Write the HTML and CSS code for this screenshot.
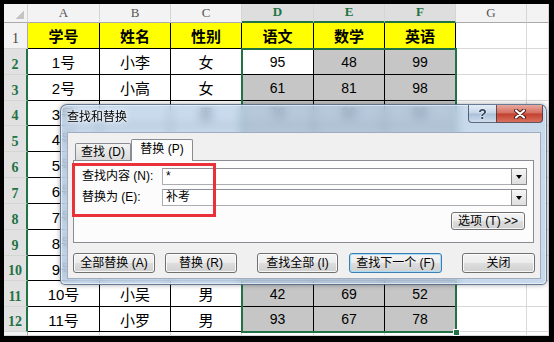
FILE: index.html
```html
<!DOCTYPE html>
<html lang="zh-CN">
<head>
    <meta charset="UTF-8">
    <title>查找和替换</title>
    <link rel="stylesheet" href="styles.css">
</head>
<body>

<div class="frame">
    <div class="sheet">
        <div class="ch corner"></div><div class="ch">A</div><div class="ch">B</div><div class="ch">C</div><div class="ch sel">D</div><div class="ch sel">E</div><div class="ch sel">F</div><div class="ch">G</div><div class="ch"></div>

        <div class="rh">1</div><div class="t hd">学号</div><div class="t hd">姓名</div><div class="t hd">性别</div><div class="t hd">语文</div><div class="t hd">数学</div><div class="t hd">英语</div><div></div><div></div>
        <div class="rh sel">2</div><div class="t">1号</div><div class="t">小李</div><div class="t">女</div><div class="t a">95</div><div class="t s">48</div><div class="t s">99</div><div></div><div></div>
        <div class="rh sel">3</div><div class="t">2号</div><div class="t">小高</div><div class="t">女</div><div class="t s">61</div><div class="t s">81</div><div class="t s">98</div><div></div><div></div>
        <!-- 4-10 行被对话框挡住 -->
        <div class="rh sel">4</div><div class="t">3号</div><div class="t"></div><div class="t">男</div><div class="t s">78</div><div class="t s">90</div><div class="t s">66</div><div></div><div></div>
        <div class="rh sel">5</div><div class="t">4号</div><div class="t"></div><div class="t"></div><div class="t s"></div><div class="t s"></div><div class="t s"></div><div></div><div></div>
        <div class="rh sel">6</div><div class="t">5号</div><div class="t"></div><div class="t"></div><div class="t s"></div><div class="t s"></div><div class="t s"></div><div></div><div></div>
        <div class="rh sel">7</div><div class="t">6号</div><div class="t"></div><div class="t"></div><div class="t s"></div><div class="t s"></div><div class="t s"></div><div></div><div></div>
        <div class="rh sel">8</div><div class="t">7号</div><div class="t"></div><div class="t"></div><div class="t s"></div><div class="t s"></div><div class="t s"></div><div></div><div></div>
        <div class="rh sel">9</div><div class="t">8号</div><div class="t"></div><div class="t"></div><div class="t s"></div><div class="t s"></div><div class="t s"></div><div></div><div></div>
        <div class="rh sel">10</div><div class="t">9号</div><div class="t"></div><div class="t"></div><div class="t s"></div><div class="t s"></div><div class="t s"></div><div></div><div></div>
        <div class="rh sel">11</div><div class="t">10号</div><div class="t">小吴</div><div class="t">男</div><div class="t s">42</div><div class="t s">69</div><div class="t s">52</div><div></div><div></div>
        <div class="rh sel">12</div><div class="t">11号</div><div class="t">小罗</div><div class="t">男</div><div class="t s">93</div><div class="t s">67</div><div class="t s">78</div><div></div><div></div>
        <div class="rh"></div><div></div><div></div><div></div><div></div><div></div><div></div><div></div><div></div>
    </div>

    <!-- 选区边框和填充柄 -->
    <div class="selection"><span class="handle"></span></div>

    <div class="dialog">
        <div class="titlebar">
            <span class="title">查找和替换</span>
            <div class="caption">
                <span class="cap help">?</span>
                <span class="cap close">
                    <svg width="12" height="10" viewBox="0 0 12 10">
                        <path d="M2 1.5 L10 8.5 M10 1.5 L2 8.5" stroke="#4a1a14" stroke-width="4" stroke-linecap="round"/>
                        <path d="M2 1.5 L10 8.5 M10 1.5 L2 8.5" stroke="#fff" stroke-width="2.2" stroke-linecap="round"/>
                    </svg>
                </span>
            </div>
        </div>
        <div class="body">
            <div class="tabs">
                <span class="tab">查找 (D)</span>
                <span class="tab on">替换 (P)</span>
            </div>
            <div class="panel">
                <div class="field">
                    <label>查找内容 (N):</label>
                    <div class="combo"><span class="val">*</span><span class="drop"></span></div>
                </div>
                <div class="field">
                    <label>替换为 (E):</label>
                    <div class="combo"><span class="val">补考</span><span class="drop"></span></div>
                </div>
                <div class="opts">
                    <button class="btn opt">选项 (T) &gt;&gt;</button>
                </div>
                <!-- 红色标注框 -->
                <div class="mark"></div>
            </div>
            <div class="actions">
                <button class="btn b1">全部替换 (A)</button>
                <button class="btn b2">替换 (R)</button>
                <button class="btn b3">查找全部 (I)</button>
                <button class="btn b4 default">查找下一个 (F)</button>
                <button class="btn b5">关闭</button>
            </div>
        </div>
    </div>
</div>

</body>
</html>
```

FILE: styles.css
```css
* {
    box-sizing: border-box;
}
html, body {
    margin: 0;
    padding: 0;
}
body {
    width: 554px;
    height: 342px;
    overflow: hidden;
    background: #000;
    font-family: "Liberation Sans", "Noto Sans CJK SC", sans-serif;
}
.frame {
    position: relative;
    height: 342px;
    padding: 4px 5px 6px 4px;
}

/* 表格 */
.sheet {
    display: grid;
    grid-template-columns: 24px 72px 71px 71px 72px 71px 71px 71px 22px;
    grid-template-rows: 19px 26px 26px 26px 25px 26px 26px 26px 26px 26px 25px 26px 25px 4px;
    height: 332px;
    background: #fff;
    overflow: hidden;
}
.sheet > div {
    display: flex;
    align-items: center;
    justify-content: center;
    border-right: 1px solid #d8d8d8;
    border-bottom: 1px solid #d8d8d8;
    font-size: 15px;
    color: #000;
    white-space: nowrap;
    overflow: hidden;
}
.sheet > .ch {
    align-items: flex-end;
    padding-bottom: 1px;
    background: #f3f3f3;
    border-right-color: #d5d5d5;
    border-bottom-color: #ababab;
    font: 13px "Liberation Serif", serif;
    color: #555;
}
.sheet > .ch.sel {
    background: #dedede;
    color: #217346;
    font-weight: bold;
    border-bottom: 2px solid #217346;
}
.sheet > .corner {
    background: linear-gradient(135deg, transparent 50%, #c4c4c4 50%) no-repeat right 3px bottom 3px / 9px 9px, #f3f3f3;
}
.sheet > .rh {
    align-items: flex-end;
    padding-bottom: 1px;
    background: #f3f3f3;
    border-right-color: #ababab;
    border-bottom-color: #d5d5d5;
    font: 14px "Liberation Serif", serif;
    color: #444;
}
.sheet > .rh.sel {
    background: #e1e1e1;
    color: #217346;
    font-weight: bold;
    border-right: 2px solid #217346;
}
.sheet > .t {
    border-right-color: #000;
    border-bottom-color: #000;
}
.sheet > .hd {
    background: #ff0;
    font-weight: bold;
    font-size: 15px;
    font-family: "Noto Sans CJK SC", sans-serif;
}
.sheet > .s {
    background: #c6c6c6;
    font-size: 14px;
}
.sheet > .a {
    font-size: 14px;
}

.selection {
    position: absolute;
    left: 241px;
    top: 48px;
    width: 216px;
    height: 285px;
    border: 2px solid #217346;
}
.handle {
    position: absolute;
    right: -5px;
    bottom: -5px;
    width: 7px;
    height: 7px;
    background: #217346;
    border: 1px solid #fff;
}

/* 对话框 */
.dialog {
    position: absolute;
    left: 60px;
    top: 104px;
    width: 487px;
    height: 181px;
    display: flex;
    flex-direction: column;
    padding: 0 5px 5px 6px;
    border: 1px solid rgba(40, 60, 90, 0.6);
    border-radius: 7px 7px 5px 5px;
    background: rgba(176, 200, 228, 0.68);
    backdrop-filter: blur(5px);
    box-shadow: 0 0 5px rgba(0, 0, 0, 0.35), inset 0 0 0 1px rgba(255, 255, 255, 0.55);
    font: 12px "Liberation Sans", "Noto Sans CJK SC", sans-serif;
    color: #000;
}
.titlebar {
    display: flex;
    justify-content: space-between;
    align-items: flex-start;
    height: 27px;
    margin-right: -2px;
}
.title {
    padding-top: 4px;
    line-height: 16px;
    text-shadow: 0 0 6px #fff, 0 0 3px #fff;
}
.caption {
    display: flex;
}
.cap {
    display: flex;
    align-items: center;
    justify-content: center;
    height: 18px;
    border: 1px solid rgba(40, 50, 70, 0.7);
    border-top: none;
}
.help {
    width: 28px;
    border-right: none;
    border-radius: 0 0 0 4px;
    background: linear-gradient(#e4edf7, #c5d5e8 48%, #a9bfd9 52%, #cfdded);
    font: bold 14px "Liberation Sans", sans-serif;
    color: #33475f;
    text-shadow: 0 0 2px #fff, 0 0 1px #fff;
}
.close {
    width: 47px;
    border-radius: 0 0 4px 0;
    background: linear-gradient(#e9a89c, #d46d5e 48%, #c23f2d 52%, #d9705e);
}

.body {
    flex: 1;
    display: flex;
    flex-direction: column;
    background: #f0f0f0;
    border: 1px solid #9fadbf;
}
.tabs {
    display: flex;
    align-items: flex-end;
    height: 27px;
    padding-left: 7px;
}
.tab {
    width: 56px;
    height: 17px;
    line-height: 16px;
    text-align: center;
    border: 1px solid #898c95;
    border-bottom: none;
    border-radius: 2px 2px 0 0;
    background: linear-gradient(#f3f3f3, #e6e6e6 50%, #dadada);
}
.tab.on {
    position: relative;
    z-index: 1;
    width: 62px;
    height: 22px;
    margin-bottom: -1px;
    line-height: 19px;
    background: #fcfcfc;
}

.panel {
    position: relative;
    height: 83px;
    margin: 0 6px 0 5px;
    padding: 7px 6px 0 8px;
    border: 1px solid #898c95;
    background: #fcfcfc;
}
.field {
    display: flex;
    align-items: center;
    height: 17px;
    margin-bottom: 4px;
}
.field label {
    width: 80px;
    line-height: 17px;
}
.combo {
    flex: 1;
    display: flex;
    height: 17px;
    border: 1px solid #abadb3;
    border-top-color: #8f9198;
    background: #fff;
}
.val {
    flex: 1;
    padding-left: 3px;
    line-height: 15px;
    font-size: 12px;
}
.drop {
    position: relative;
    width: 16px;
    margin: -1px -1px -1px 0;
    border: 1px solid #8a8a8a;
    background: linear-gradient(#f6f6f6, #dedede);
}
.drop::after {
    content: "";
    position: absolute;
    left: 4px;
    top: 6px;
    border-top: 4px solid #000;
    border-left: 3.5px solid transparent;
    border-right: 3.5px solid transparent;
}
.opts {
    display: flex;
    justify-content: flex-end;
    margin-top: 6px;
    padding-right: 2px;
}
.mark {
    position: absolute;
    left: -2px;
    top: 2px;
    width: 144px;
    height: 54px;
    border: 3px solid #ea3038;
}

.btn {
    height: 20px;
    padding: 0;
    border: 1px solid #707070;
    border-radius: 3px;
    background: linear-gradient(#f4f4f4, #ececec 48%, #dddddd 52%, #d0d0d0);
    box-shadow: inset 0 0 0 1px rgba(255, 255, 255, 0.8);
    font: 12px "Liberation Sans", "Noto Sans CJK SC", sans-serif;
    line-height: 16px;
    color: #000;
    text-align: center;
    white-space: nowrap;
}
.btn.opt {
    width: 74px;
    height: 18px;
    line-height: 14px;
}
.actions {
    display: flex;
    margin-top: 10px;
    padding-left: 5px;
}
.b1 { width: 82px; }
.b2 { width: 72px; margin-left: 10px; }
.b3 { width: 81px; margin-left: 20px; }
.b4 { width: 93px; margin-left: 11px; }
.b5 { width: 73px; margin-left: 20px; }
.btn.default {
    border-color: #3c7fb1;
    box-shadow: inset 0 0 0 1px #a9dcf6;
}
```
